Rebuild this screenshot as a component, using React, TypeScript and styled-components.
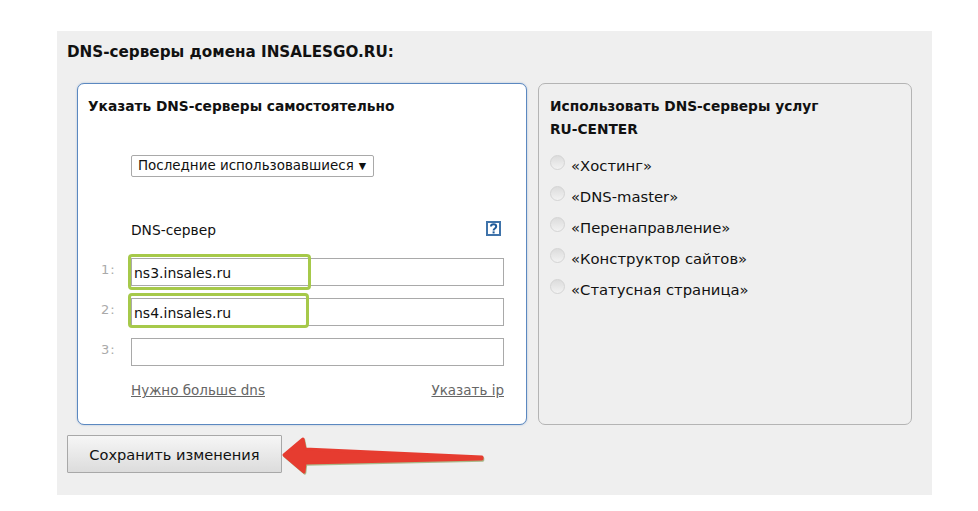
import styled, { createGlobalStyle } from "styled-components";

const GlobalStyle = createGlobalStyle`
    html, body {
        margin: 0;
        padding: 0;
        background: #fff;
    }
    body {
        font-family: "DejaVu Sans", Verdana, sans-serif;
        color: #111;
    }
`;

const Page = styled.div`
    width: 978px;
    height: 511px;
    padding: 31px 46px 16px 57px;
    box-sizing: border-box;
    overflow: hidden;
`;

const Panel = styled.section`
    position: relative;
    height: 464px;
    background: #efefef;
    padding: 12px 10px 0;
    box-sizing: border-box;
`;

const Title = styled.h2`
    margin: 0 0 22px;
    font-size: 15.2px;
    line-height: 18px;
    font-weight: 700;
`;

const Columns = styled.div`
    display: flex;
    gap: 11px;
    margin-left: 10px;
`;

const Card = styled.div<{ $active?: boolean }>`
    box-sizing: border-box;
    height: 342px;
    border-radius: 7px;
    border: 1px solid ${(p) => (p.$active ? "#5b88c0" : "#b4b4b4")};
    background: ${(p) => (p.$active ? "#fff" : "#efefef")};
    width: ${(p) => (p.$active ? "450px" : "374px")};
    padding: 11px 10px 11px ${(p) => (p.$active ? "10px" : "11px")};
    box-shadow: ${(p) => (p.$active ? "0 0 2px rgba(91,136,192,.5)" : "none")};
`;

const CardTitle = styled.h3`
    margin: 0;
    font-size: 13.75px;
    line-height: 23px;
    font-weight: 700;
`;

const Indented = styled.div`
    margin-left: 43px;
    width: 373px;
`;

const SelectBox = styled.div`
    display: inline-flex;
    align-items: center;
    gap: 5px;
    box-sizing: border-box;
    margin-top: 37px;
    height: 22px;
    width: 243px;
    padding: 0 0 0 6px;
    border: 1px solid #a9a9a9;
    border-radius: 2px;
    font-size: 13.45px;
    line-height: 20px;
    white-space: nowrap;
    background: #fff;
`;

const Caret = styled.span`
    font-size: 9.5px;
    line-height: 20px;
`;

const HeadRow = styled.div`
    display: flex;
    justify-content: space-between;
    align-items: center;
    margin-top: 42px;
    height: 22px;
    font-size: 13.8px;
`;

const HelpIcon = styled.svg`
    display: block;
    margin-right: 3px;
    margin-top: -4px;
`;

const Fields = styled.div`
    display: flex;
    flex-direction: column;
    gap: 12px;
    margin-top: 17px;
`;

const FieldRow = styled.div`
    position: relative;
    display: flex;
    margin-left: -32px;
    width: 405px;
`;

const FieldNumber = styled.span`
    width: 32px;
    box-sizing: border-box;
    padding-left: 2px;
    padding-top: 3px;
    font-size: 13px;
    line-height: 18px;
    color: #aaa;
    letter-spacing: 1px;
`;

const FieldInput = styled.div`
    box-sizing: border-box;
    width: 373px;
    height: 28px;
    padding-left: 2px;
    border: 1px solid #a9a9a9;
    background: #fff;
    font-size: 14px;
    line-height: 28px;
`;

const Highlight = styled.span<{ $top: number; $left: number; $width: number; $height: number }>`
    position: absolute;
    top: ${(p) => p.$top}px;
    left: ${(p) => p.$left}px;
    width: ${(p) => p.$width}px;
    height: ${(p) => p.$height}px;
    box-sizing: border-box;
    border: 3px solid #a6c94a;
    border-radius: 4px;
`;

const Links = styled.div`
    display: flex;
    justify-content: space-between;
    margin-top: 15px;
    font-size: 13.5px;
    line-height: 18px;
`;

const MutedLink = styled.a`
    color: #666;
    text-decoration: underline;
`;

const ServiceList = styled.div`
    display: flex;
    flex-direction: column;
    gap: 11px;
    margin-top: 15px;
`;

const ServiceItem = styled.label`
    display: flex;
    align-items: flex-start;
    gap: 6px;
    height: 20px;
    font-size: 14.8px;
    line-height: 20px;
`;

const Radio = styled.span`
    box-sizing: border-box;
    flex: none;
    width: 15px;
    height: 15px;
    margin-top: -1px;
    border: 1px solid #d4d4d4;
    border-radius: 50%;
    background: linear-gradient(#dcdcdc, #f2f2f2);
`;

const SaveButton = styled.button`
    display: block;
    box-sizing: border-box;
    width: 215px;
    height: 38px;
    margin-top: 10px;
    padding: 0;
    border: 1px solid #a8a8a8;
    border-radius: 1px;
    background: linear-gradient(#f6f6f6, #dcdcdc);
    font-family: inherit;
    font-size: 14.6px;
    color: #111;
`;

const Arrow = styled.svg`
    position: absolute;
    left: 220px;
    top: 403px;
`;

const services = [
    "«Хостинг»",
    "«DNS-master»",
    "«Перенаправление»",
    "«Конструктор сайтов»",
    "«Статусная страница»",
];

const fields = [
    { n: "1:", value: "ns3.insales.ru", mark: { $top: -4, $left: 29, $width: 183, $height: 36 } },
    { n: "2:", value: "ns4.insales.ru", mark: { $top: -5, $left: 29, $width: 181, $height: 35 } },
    { n: "3:", value: "" },
];

const arrowPath = "M7 21 L26 5 L28 15 L205 23 L205 25 L28 29 L27 38 Z";

const App = () => {
    return (
        <Page>
            <GlobalStyle />
            <Panel>
                <Title>DNS-серверы домена INSALESGO.RU:</Title>
                <Columns>
                    <Card $active>
                        <CardTitle>Указать DNS-серверы самостоятельно</CardTitle>
                        <Indented>
                            <SelectBox>
                                Последние использовавшиеся
                                <Caret>▼</Caret>
                            </SelectBox>
                            <HeadRow>
                                <span>DNS-сервер</span>
                                <HelpIcon width="15" height="15" viewBox="0 0 15 15">
                                    <rect x="1" y="1" width="13" height="13" fill="#fff" stroke="#3f73aa" strokeWidth="2" />
                                    <path
                                        d="M5 5.6c0-3 5.2-3 5.2 0 0 2-2.6 1.9-2.6 3.9"
                                        fill="none"
                                        stroke="#1f5a99"
                                        strokeWidth="2"
                                    />
                                    <rect x="6.6" y="10.4" width="2" height="2" fill="#1f5a99" />
                                </HelpIcon>
                            </HeadRow>
                            <Fields>
                                {fields.map((f) => (
                                    <FieldRow key={f.n}>
                                        <FieldNumber>{f.n}</FieldNumber>
                                        <FieldInput>{f.value}</FieldInput>
                                        {f.mark && <Highlight {...f.mark} />}
                                    </FieldRow>
                                ))}
                            </Fields>
                            <Links>
                                <MutedLink>Нужно больше dns</MutedLink>
                                <MutedLink>Указать ip</MutedLink>
                            </Links>
                        </Indented>
                    </Card>
                    <Card>
                        <CardTitle>
                            Использовать DNS-серверы услуг
                            <br />
                            RU-CENTER
                        </CardTitle>
                        <ServiceList>
                            {services.map((s) => (
                                <ServiceItem key={s}>
                                    <Radio />
                                    {s}
                                </ServiceItem>
                            ))}
                        </ServiceList>
                    </Card>
                </Columns>
                <SaveButton>Сохранить изменения</SaveButton>
                <Arrow width="210" height="50" viewBox="0 0 210 50">
                    <path
                        d={arrowPath}
                        fill="#a9b98a"
                        stroke="#a9b98a"
                        strokeWidth="3"
                        strokeLinejoin="round"
                        transform="translate(0.8 1.2)"
                    />
                    <path d={arrowPath} fill="#e63c30" stroke="#e63c30" strokeWidth="3" strokeLinejoin="round" />
                </Arrow>
            </Panel>
        </Page>
    );
};

export default App;
